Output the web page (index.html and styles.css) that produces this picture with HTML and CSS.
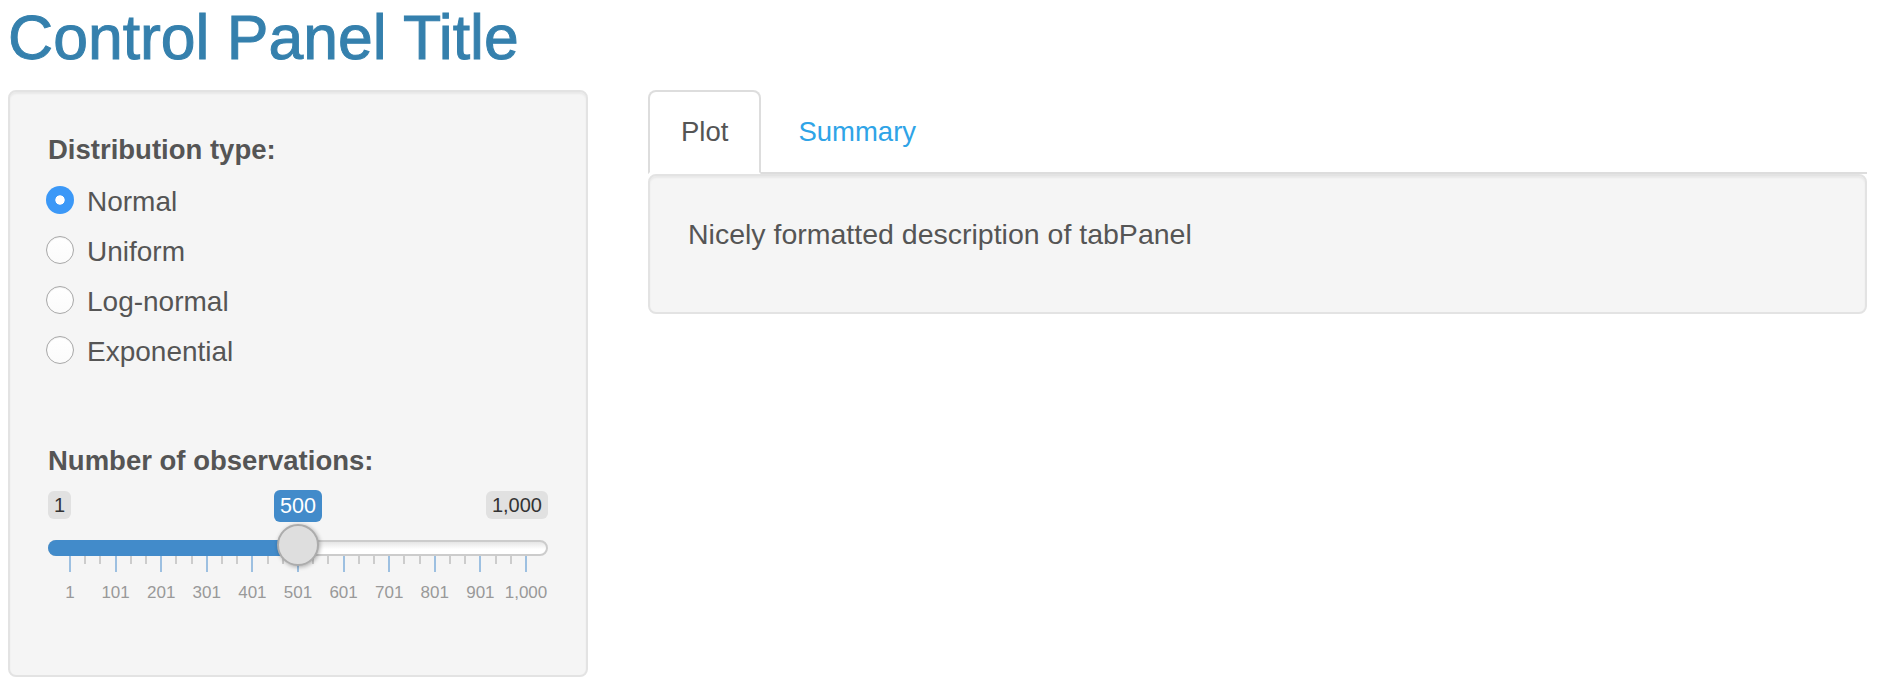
FILE: index.html
```html
<!DOCTYPE html>
<html lang="en">
<head>
<meta charset="utf-8">
<title>Control Panel Title</title>
<link rel="stylesheet" href="styles.css">
</head>
<body>
<div class="page">
  <h2 class="title">Control Panel Title</h2>
  <div class="row">
    <aside class="sidebar">
      <div class="form-group">
        <label class="control-label">Distribution type:</label>
        <div class="radios">
          <label class="radio"><span class="radio-dot checked"></span><span>Normal</span></label>
          <label class="radio"><span class="radio-dot"></span><span>Uniform</span></label>
          <label class="radio"><span class="radio-dot"></span><span>Log-normal</span></label>
          <label class="radio"><span class="radio-dot"></span><span>Exponential</span></label>
        </div>
      </div>
      <div class="form-group slider-group">
        <label class="control-label">Number of observations:</label>
        <div class="irs">
          <span class="irs-min">1</span>
          <span class="irs-max">1,000</span>
          <span class="irs-line"></span>
          <span class="irs-bar"></span>
          <div class="irs-grid">
            <span class="tick major" style="left:21px"></span>
            <span class="tick" style="left:36.2px"></span>
            <span class="tick" style="left:51.4px"></span>
            <span class="tick major" style="left:66.6px"></span>
            <span class="tick" style="left:81.8px"></span>
            <span class="tick" style="left:97px"></span>
            <span class="tick major" style="left:112.2px"></span>
            <span class="tick" style="left:127.4px"></span>
            <span class="tick" style="left:142.6px"></span>
            <span class="tick major" style="left:157.8px"></span>
            <span class="tick" style="left:173px"></span>
            <span class="tick" style="left:188.2px"></span>
            <span class="tick major" style="left:203.4px"></span>
            <span class="tick" style="left:218.6px"></span>
            <span class="tick" style="left:233.8px"></span>
            <span class="tick major" style="left:249px"></span>
            <span class="tick" style="left:264.2px"></span>
            <span class="tick" style="left:279.4px"></span>
            <span class="tick major" style="left:294.6px"></span>
            <span class="tick" style="left:309.8px"></span>
            <span class="tick" style="left:325px"></span>
            <span class="tick major" style="left:340.2px"></span>
            <span class="tick" style="left:355.4px"></span>
            <span class="tick" style="left:370.6px"></span>
            <span class="tick major" style="left:385.8px"></span>
            <span class="tick" style="left:401px"></span>
            <span class="tick" style="left:416.2px"></span>
            <span class="tick major" style="left:431.4px"></span>
            <span class="tick" style="left:446.6px"></span>
            <span class="tick" style="left:461.8px"></span>
            <span class="tick major" style="left:477px"></span>
            <span class="grid-text" style="left:22px">1</span>
            <span class="grid-text" style="left:67.6px">101</span>
            <span class="grid-text" style="left:113.2px">201</span>
            <span class="grid-text" style="left:158.8px">301</span>
            <span class="grid-text" style="left:204.4px">401</span>
            <span class="grid-text" style="left:250px">501</span>
            <span class="grid-text" style="left:295.6px">601</span>
            <span class="grid-text" style="left:341.2px">701</span>
            <span class="grid-text" style="left:386.8px">801</span>
            <span class="grid-text" style="left:432.4px">901</span>
            <span class="grid-text" style="left:478px">1,000</span>
          </div>
          <span class="irs-single">500</span>
          <span class="irs-handle"></span>
        </div>
      </div>
    </aside>
    <main class="main">
      <ul class="nav-tabs">
        <li class="active"><a href="#">Plot</a></li>
        <li><a href="#">Summary</a></li>
      </ul>
      <div class="tab-content">
        <p>Nicely formatted description of tabPanel</p>
      </div>
    </main>
  </div>
</div>
</body>
</html>
```

FILE: styles.css
```css
html, body {
  margin: 0;
  padding: 0;
  background: #ffffff;
}

body {
  font-family: "Liberation Sans", Arial, Helvetica, sans-serif;
  color: #555555;
}

.page {
  padding: 0 25px 0 8px;
}

.title {
  margin: 3px 0 0 0;
  font-size: 62.5px;
  line-height: 68px;
  font-weight: normal;
  color: #3580ad;
  -webkit-text-stroke: 1px #3580ad;
}

.row {
  display: flex;
  align-items: flex-start;
  gap: 60px;
  margin-top: 19px;
}

/* ---------- sidebar ---------- */
.sidebar {
  width: 580px;
  flex: none;
  box-sizing: border-box;
  padding: 38px;
  border: 2px solid #e3e3e3;
  border-radius: 8px;
  background: #f5f5f5;
  box-shadow: inset 0 2px 2px rgba(0, 0, 0, 0.05);
}

.control-label {
  display: block;
  font-weight: bold;
  font-size: 27.5px;
  line-height: 40px;
  color: #555555;
}

.radios {
  margin-top: 12px;
  display: flex;
  flex-direction: column;
  gap: 10px;
}

.radio {
  display: flex;
  align-items: flex-start;
  gap: 13px;
  margin-left: -2px;
  font-size: 28px;
  line-height: 40px;
  color: #555555;
}

.radio-dot {
  flex: none;
  width: 28px;
  height: 28px;
  margin-top: 4px;
  box-sizing: border-box;
  border-radius: 50%;
  border: 1px solid #a8a8a8;
  background: linear-gradient(#ffffff, #fbfbfb);
  box-shadow: inset 0 1px 1px rgba(0, 0, 0, 0.06);
}

.radio-dot.checked {
  border: none;
  background: radial-gradient(circle, #ffffff 0 4.3px, #3b98f7 5px);
  box-shadow: none;
}

.slider-group {
  margin-top: 69px;
}

/* ---------- slider ---------- */
.irs {
  position: relative;
  height: 156px;
}

.irs-min,
.irs-max {
  position: absolute;
  top: 10px;
  height: 28px;
  padding: 0 6px;
  font-size: 20px;
  line-height: 28px;
  color: #333333;
  background: #e1e1e1;
  border-radius: 6px;
}

.irs-min {
  left: 0;
}

.irs-max {
  right: 0;
}

.irs-single {
  position: absolute;
  top: 9px;
  left: 226px;
  width: 48px;
  height: 32px;
  box-sizing: border-box;
  text-align: center;
  font-size: 21.5px;
  line-height: 32px;
  color: #ffffff;
  background: #428bca;
  border-radius: 6px;
}

.irs-line {
  position: absolute;
  top: 59px;
  left: 0;
  width: 500px;
  height: 16px;
  box-sizing: border-box;
  border: 2px solid #cccccc;
  border-radius: 8px;
  background: linear-gradient(#e6e6e6, #ffffff 60%);
}

.irs-bar {
  position: absolute;
  top: 59px;
  left: 0;
  width: 252px;
  height: 16px;
  border-radius: 8px 0 0 8px;
  background: #428bca;
}

.irs-grid {
  position: absolute;
  top: 75px;
  left: 0;
  width: 500px;
  height: 60px;
}

.tick {
  position: absolute;
  top: 0;
  width: 2px;
  height: 8px;
  background: #cccccc;
}

.tick.major {
  height: 16px;
  background: #9dc0e1;
}

.grid-text {
  position: absolute;
  top: 28px;
  transform: translateX(-50%);
  font-size: 17px;
  line-height: 17px;
  white-space: nowrap;
  color: #999999;
}

.irs-handle {
  position: absolute;
  top: 43px;
  left: 229px;
  width: 42px;
  height: 42px;
  box-sizing: border-box;
  border-radius: 50%;
  border: 2px solid #acacac;
  background: #dedede;
  box-shadow: 1px 1px 4px rgba(0, 0, 0, 0.3);
}

/* ---------- main ---------- */
.main {
  flex: 1;
  min-width: 0;
}

.nav-tabs {
  list-style: none;
  margin: 0;
  padding: 0;
  display: flex;
  border-bottom: 2px solid #dddddd;
}

.nav-tabs a {
  display: block;
  margin-right: 4px;
  margin-bottom: -2px;
  padding: 20px 31px;
  border: 2px solid transparent;
  border-radius: 8px 8px 0 0;
  font-size: 27.5px;
  line-height: 40px;
  color: #2fa4e7;
  text-decoration: none;
}

.nav-tabs .active a {
  color: #555555;
  background: #ffffff;
  border-color: #dddddd #dddddd transparent;
}

.tab-content {
  padding: 38px;
  border: 2px solid #e3e3e3;
  border-radius: 8px;
  background: #f5f5f5;
  box-shadow: inset 0 2px 2px rgba(0, 0, 0, 0.05);
}

.tab-content p {
  margin: 0 0 20px;
  font-size: 28.5px;
  line-height: 40px;
  color: #555555;
}
```
